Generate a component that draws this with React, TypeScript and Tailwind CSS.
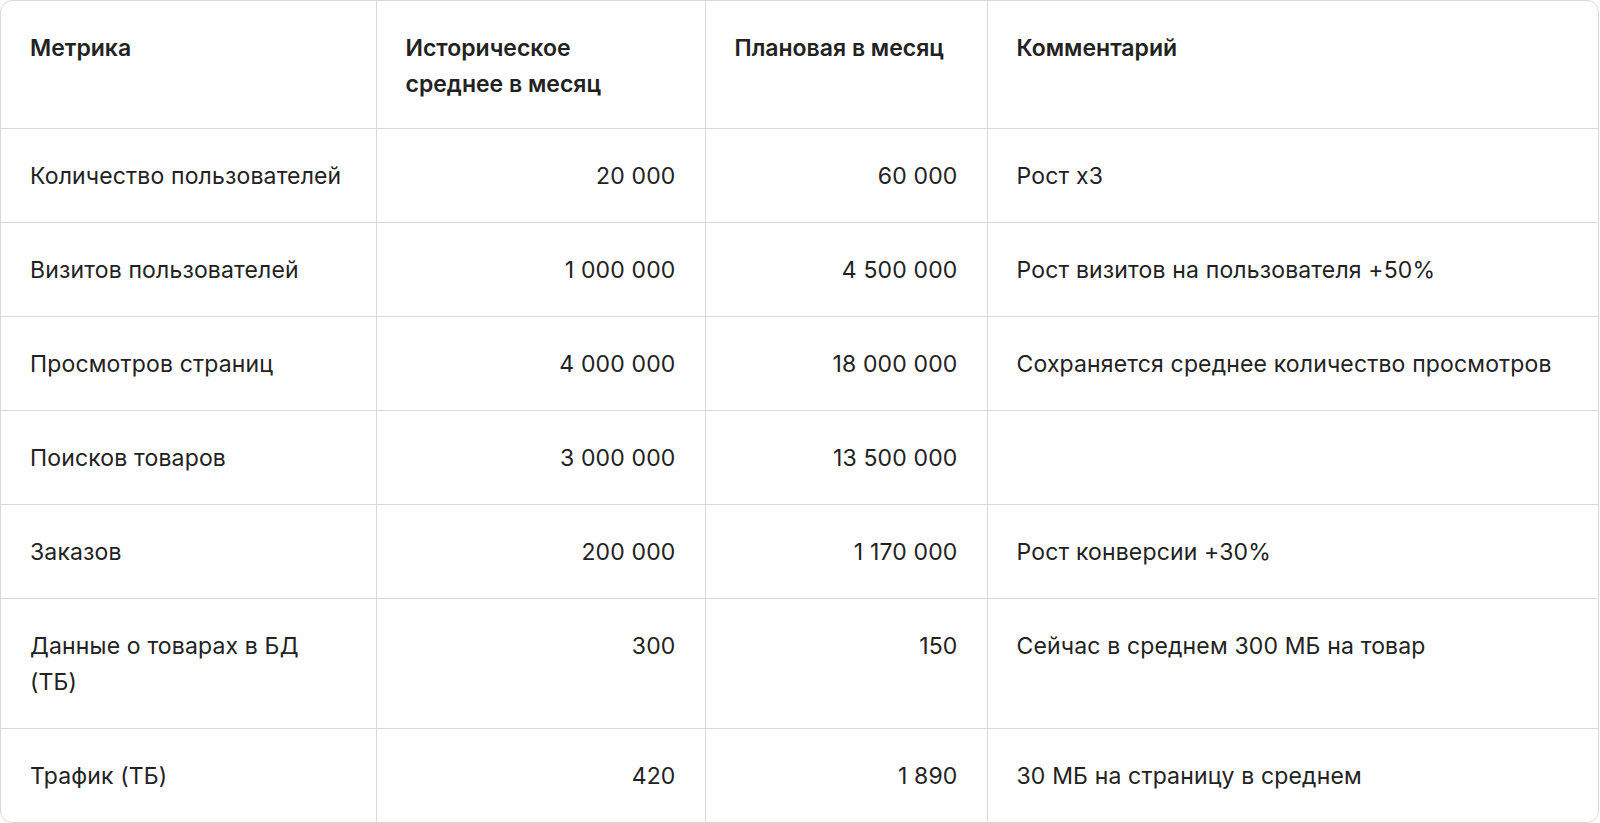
const rows: [React.ReactNode, string, string, string][] = [
  ["Количество пользователей", "20 000", "60 000", "Рост x3"],
  ["Визитов пользователей", "1 000 000", "4 500 000", "Рост визитов на пользователя +50%"],
  ["Просмотров страниц", "4 000 000", "18 000 000", "Сохраняется среднее количество просмотров"],
  ["Поисков товаров", "3 000 000", "13 500 000", ""],
  ["Заказов", "200 000", "1 170 000", "Рост конверсии +30%"],
  [<>Данные о товарах в БД<br />(ТБ)</>, "300", "150", "Сейчас в среднем 300 МБ на товар"],
  ["Трафик (ТБ)", "420", "1 890", "30 МБ на страницу в среднем"],
];

export default function App() {
  return (
    <div className="w-[1600px] min-h-[823px] bg-white" style={{ fontFamily: "Inter, 'Noto Sans', sans-serif" }}>
      <div className="w-[1599px] rounded-xl border border-[#d9d9d9] overflow-hidden">
        <table className="w-full table-fixed border-collapse text-[23px] leading-[36px] text-[#222222]">
          <colgroup>
            <col className="w-[375px]" />
            <col className="w-[329px]" />
            <col className="w-[282px]" />
            <col />
          </colgroup>
          <thead>
            <tr className="border-b border-[#d9d9d9] align-top">
              <th className="px-[29px] pt-[29px] pb-[26px] text-left font-semibold">Метрика</th>
              <th className="px-[29px] pt-[29px] pb-[26px] text-left font-semibold border-l border-[#d9d9d9]">
                Историческое
                <br />
                среднее в месяц
              </th>
              <th className="px-[29px] pt-[29px] pb-[26px] text-left font-semibold border-l border-[#d9d9d9]">Плановая в месяц</th>
              <th className="px-[29px] pt-[29px] pb-[26px] text-left font-semibold border-l border-[#d9d9d9]">Комментарий</th>
            </tr>
          </thead>
          <tbody className="tracking-[0.15px]">
            {rows.map((r, i) => (
              <tr key={i} className={`align-top ${i < rows.length - 1 ? "border-b border-[#d9d9d9]" : ""}`}>
                <td className="px-[29px] pt-[29px] pb-[28px]">{r[0]}</td>
                <td className="px-[29px] pt-[29px] pb-[28px] text-right border-l border-[#d9d9d9]">{r[1]}</td>
                <td className="px-[29px] pt-[29px] pb-[28px] text-right border-l border-[#d9d9d9]">{r[2]}</td>
                <td className="px-[29px] pt-[29px] pb-[28px] border-l border-[#d9d9d9]">{r[3]}</td>
              </tr>
            ))}
          </tbody>
        </table>
      </div>
    </div>
  );
}
